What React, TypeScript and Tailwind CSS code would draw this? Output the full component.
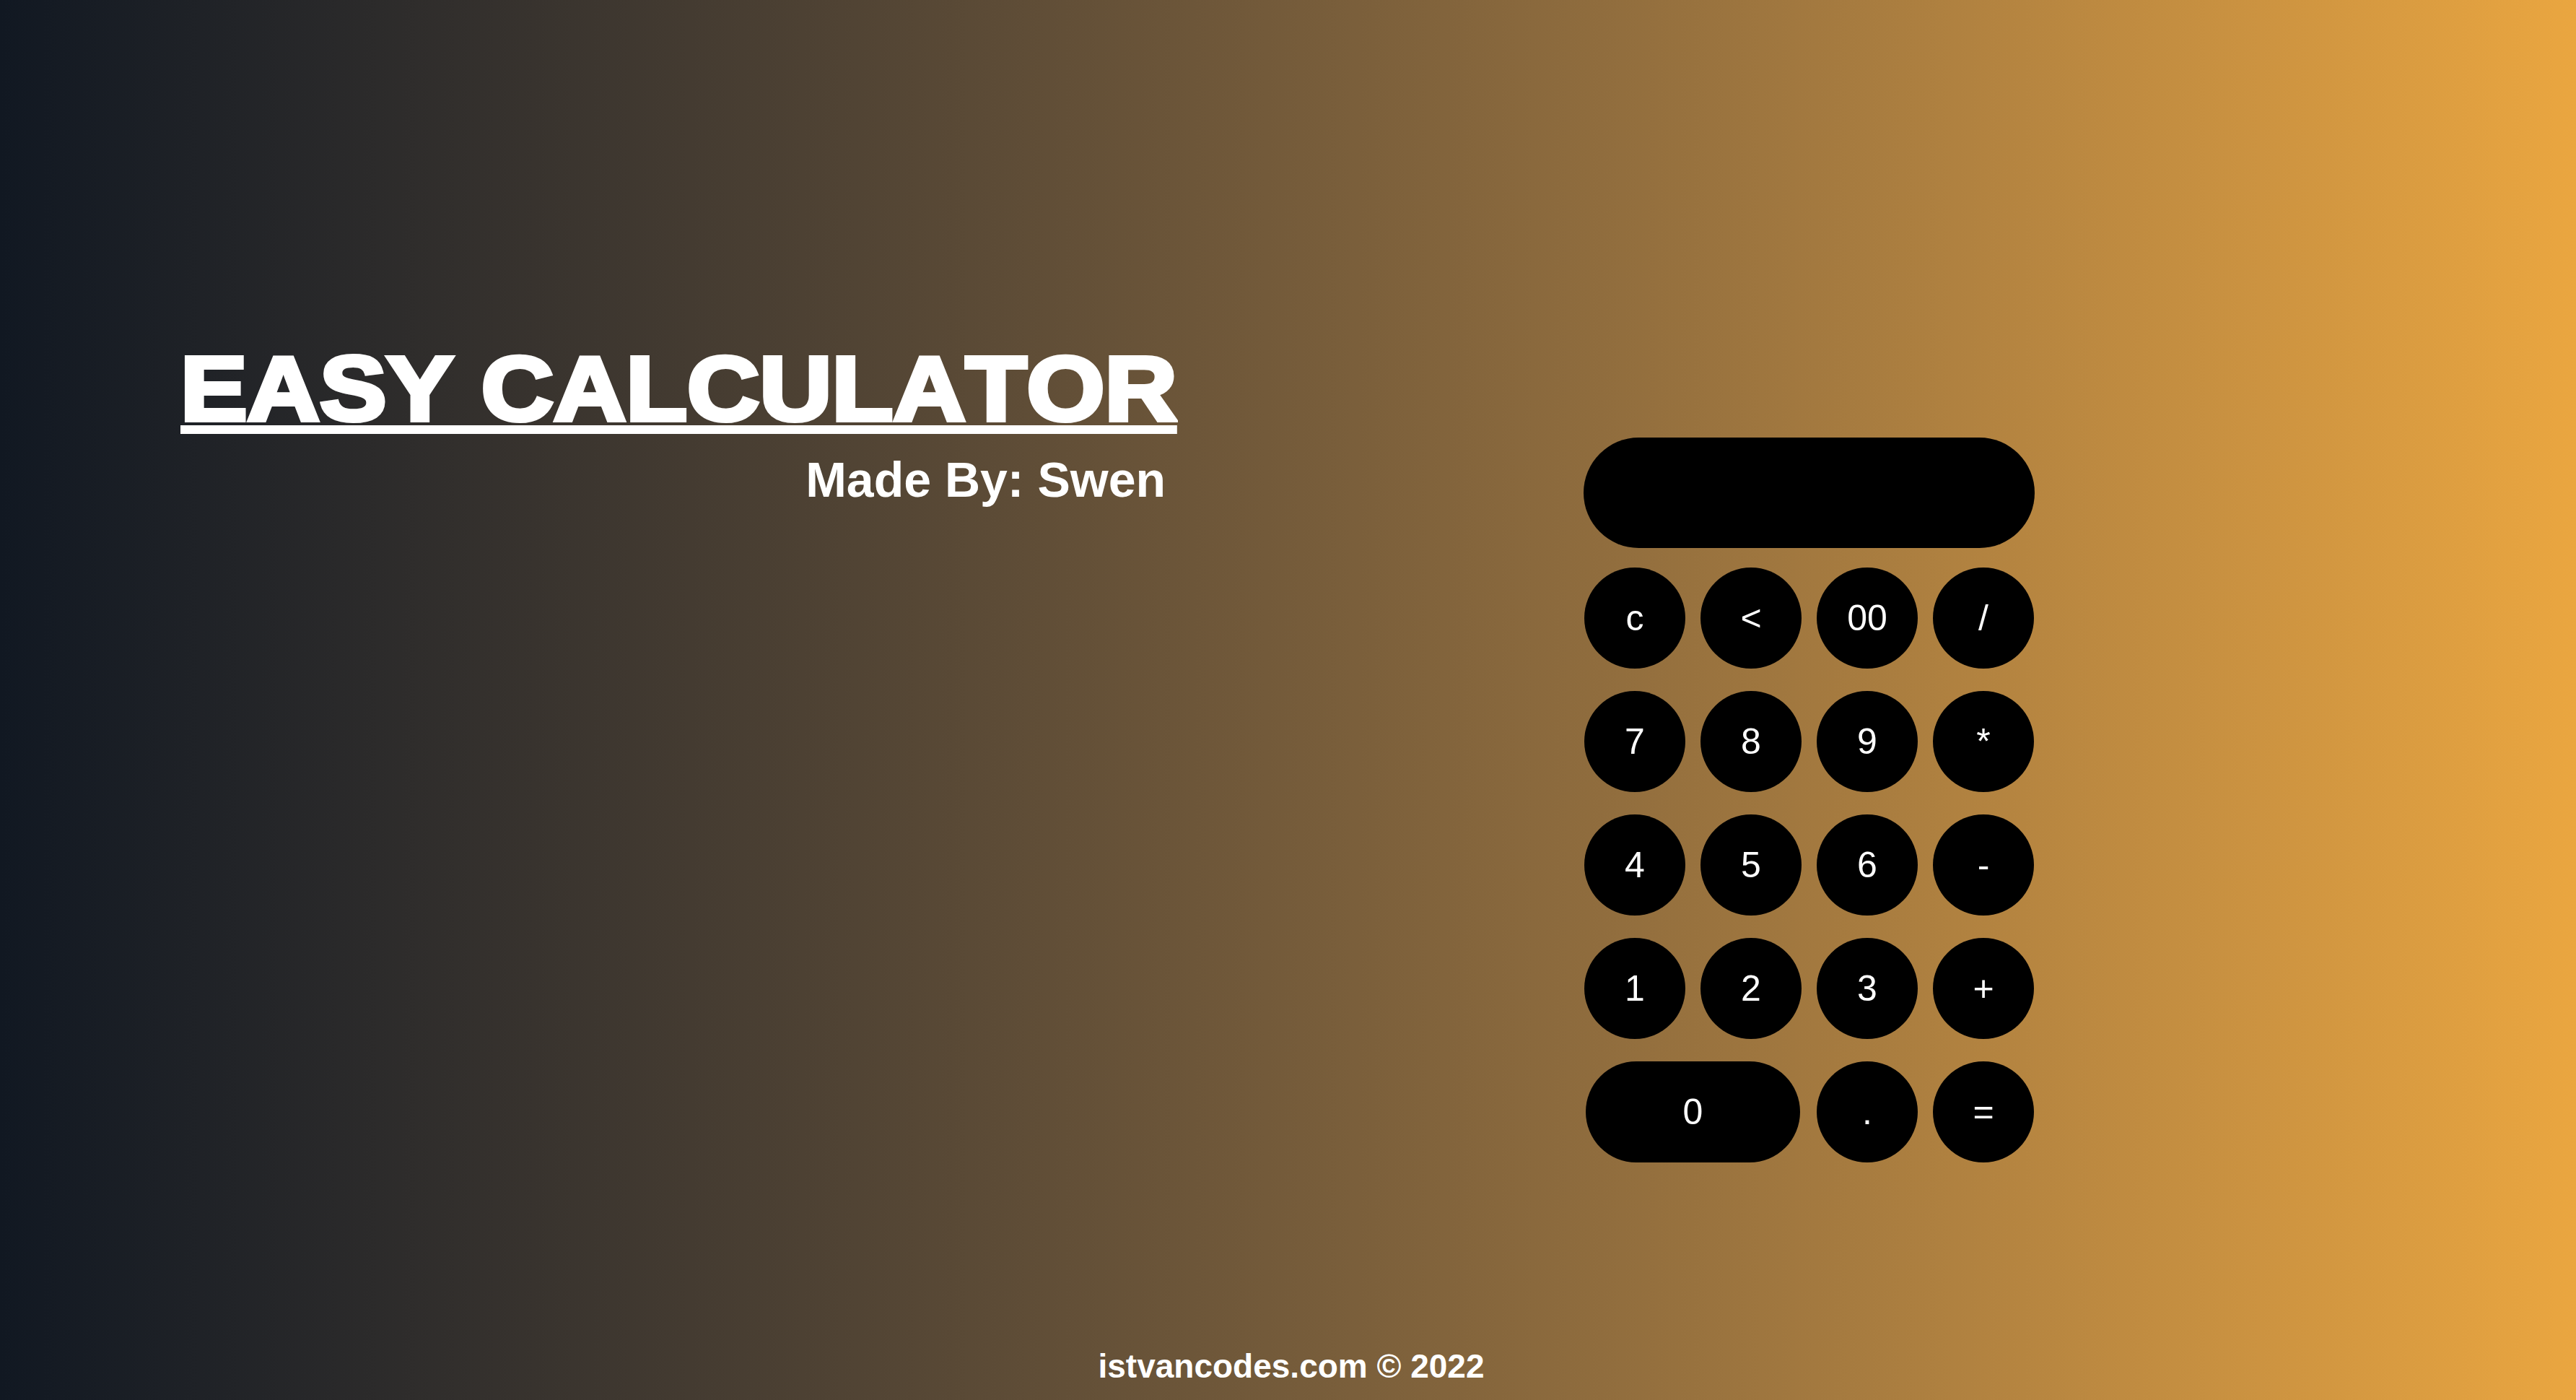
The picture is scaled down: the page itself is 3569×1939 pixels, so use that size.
import React from "react";

const keys: { label: string; wide?: boolean }[] = [
  { label: "c" },
  { label: "<" },
  { label: "00" },
  { label: "/" },
  { label: "7" },
  { label: "8" },
  { label: "9" },
  { label: "*" },
  { label: "4" },
  { label: "5" },
  { label: "6" },
  { label: "-" },
  { label: "1" },
  { label: "2" },
  { label: "3" },
  { label: "+" },
  { label: "0", wide: true },
  { label: "." },
  { label: "=" },
];

const Calculator = () => {
  return (
    <div className="flex flex-col">
      <div className="w-[625px] h-[153px] rounded-full bg-black" />
      <div className="grid grid-cols-[repeat(4,140px)] gap-x-[21px] gap-y-[31px] mt-[27px] pl-px">
        {keys.map((k, i) => (
          <button
            key={i}
            className={
              k.wide
                ? "col-span-2 h-[140px] mx-[2px] rounded-full bg-black text-white text-[50px] leading-none flex items-center justify-center"
                : "w-[140px] h-[140px] rounded-full bg-black text-white text-[50px] leading-none flex items-center justify-center"
            }
          >
            {k.label}
          </button>
        ))}
      </div>
    </div>
  );
};

const App = () => {
  return (
    <div className="h-screen flex flex-col overflow-hidden bg-gradient-to-r from-[#111822] to-[#eaa640] text-white font-['Liberation_Sans',Arial,sans-serif]">
      <main className="flex-1 flex">
        <div className="ml-[250px] pt-[476px] w-[1380px] flex flex-col">
          <h1 className="text-[126px] leading-none font-bold whitespace-nowrap [font-kerning:none] origin-left scale-x-[1.102] underline decoration-[12px] underline-offset-[7px] [-webkit-text-stroke:6px_white]">
            EASY CALCULATOR
          </h1>
          <p className="mt-[28px] pr-[15px] text-right text-[68px] leading-none font-bold">
            Made By: Swen
          </p>
        </div>
        <div className="ml-auto mr-[750px] pt-[606px]">
          <Calculator />
        </div>
      </main>
      <footer className="pb-[24px] pl-[9px] text-center text-[46px] leading-none font-bold">
        istvancodes.com © 2022
      </footer>
    </div>
  );
};

export default App;
